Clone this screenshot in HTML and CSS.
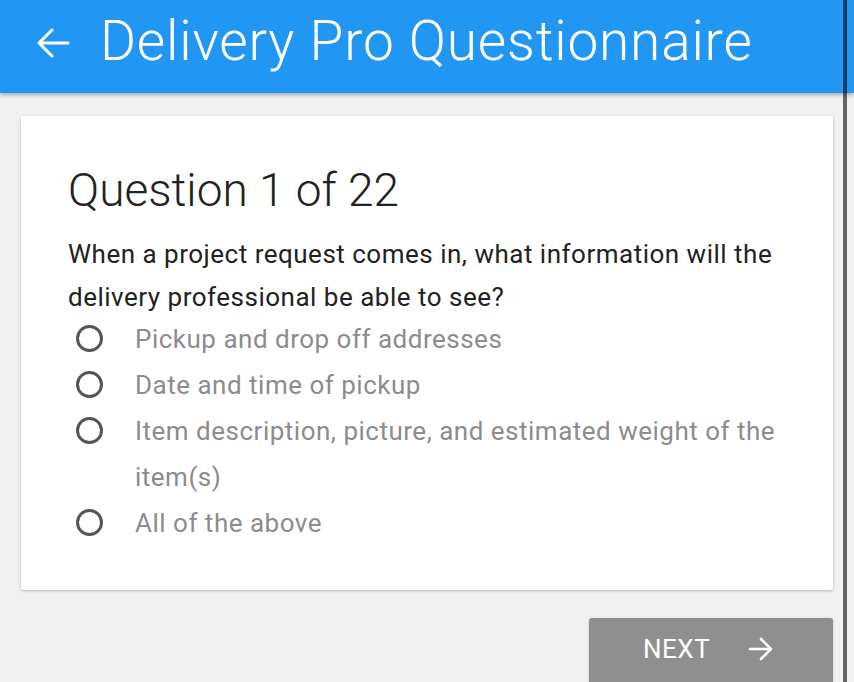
FILE: index.html
```html
<!DOCTYPE html>
<html>
<head>
<meta charset="utf-8">
<link rel="stylesheet" href="styles.css">
</head>
<body>
<header class="appbar">
  <svg class="back" width="36" height="36" viewBox="0 0 36 36">
    <path d="M33 18H4M17 5L4 18l13 13" fill="none" stroke="#fff" stroke-width="3" stroke-linecap="round" stroke-linejoin="round"/>
  </svg>
  <h1 class="title">Delivery Pro Questionnaire</h1>
</header>
<main class="content">
  <section class="card">
    <h2 class="qnum">Question 1 of 22</h2>
    <p class="qtext">When a project request comes in, what information will the delivery professional be able to see?</p>
    <ul class="options">
      <li class="option"><span class="radio"></span><span class="label">Pickup and drop off addresses</span></li>
      <li class="option"><span class="radio"></span><span class="label">Date and time of pickup</span></li>
      <li class="option"><span class="radio"></span><span class="label">Item description, picture, and estimated weight of the item(s)</span></li>
      <li class="option"><span class="radio"></span><span class="label">All of the above</span></li>
    </ul>
  </section>
  <div class="actions">
    <button class="next">NEXT
      <svg class="next-arrow" width="26" height="26" viewBox="0 0 26 26">
        <path d="M2 13h21M13 3l10 10-10 10" fill="none" stroke="#fff" stroke-width="2.6" stroke-linecap="round" stroke-linejoin="round"/>
      </svg>
    </button>
  </div>
</main>
<div class="edge"></div>
</body>
</html>
```
FILE: styles.css
```css
html, body {
  margin: 0;
  padding: 0;
}
body {
  background: #f1f1f1;
  font-family: Roboto, "Liberation Sans", sans-serif;
  width: 854px;
  height: 682px;
  overflow: hidden;
  position: relative;
}
.appbar {
  height: 93px;
  background: #2196f3;
  display: flex;
  align-items: center;
  box-shadow: 0 2px 4px rgba(0,0,0,0.3);
  position: relative;
  z-index: 1;
}
.back {
  margin-left: 35px;
  margin-top: -8px;
}
.title {
  margin: -12px 0 0 29px;
  font-weight: 300;
  font-size: 55px;
  color: #fff;
  letter-spacing: 0.8px;
}
.content {
  padding: 23px 21px 0 21px;
}
.card {
  background: #fff;
  box-shadow: 0 1px 3px rgba(0,0,0,0.25);
  border-radius: 2px;
  padding: 48px 47px 44px 47px;
}
.qnum {
  margin: 0;
  font-weight: 300;
  font-size: 46px;
  line-height: 52px;
  color: #222;
}
.qtext {
  margin: 17px 0 0 0;
  font-size: 26px;
  letter-spacing: 0.5px;
  line-height: 43px;
  color: #222;
}
.options {
  list-style: none;
  margin: -3px 0 0 0;
  padding: 0;
}
.option {
  display: flex;
  align-items: flex-start;
  font-size: 26px;
  letter-spacing: 0.5px;
  line-height: 46px;
  color: #8c8c8c;
}
.radio {
  flex: none;
  width: 21px;
  height: 21px;
  border: 3.5px solid #555;
  border-radius: 50%;
  margin: 9px 0 0 8px;
}
.label {
  margin-left: 32px;
}
.actions {
  display: flex;
  justify-content: flex-end;
  margin-top: 28px;
}
.next {
  width: 244px;
  height: 66px;
  border: none;
  border-radius: 3px;
  background: #8f8f8f;
  color: #fff;
  font-family: Roboto, "Liberation Sans", sans-serif;
  font-size: 26px;
  letter-spacing: 0.5px;
  display: flex;
  align-items: center;
  padding: 0 0 4px 54px;
  margin-bottom: -20px;
  box-shadow: 0 1px 3px rgba(0,0,0,0.2);
}
.next-arrow {
  margin-left: 38px;
}
.edge {
  position: absolute;
  top: 0;
  bottom: 0;
  left: 843px;
  width: 4px;
  background: rgba(0,0,0,0.58);
  z-index: 2;
}
```
